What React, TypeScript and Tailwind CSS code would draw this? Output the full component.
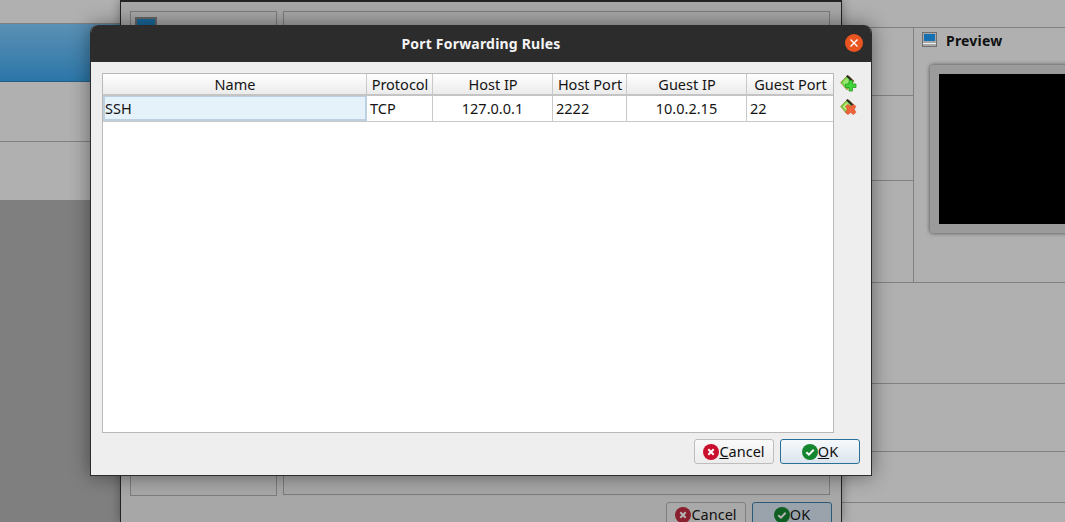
import type { ReactNode } from 'react'

const font = { sans: 'font-["Noto_Sans",sans-serif]' }

function CancelIcon({ dim }: { dim?: boolean }) {
  return (
    <svg viewBox="0 0 16 16" className="h-4 w-4 shrink-0">
      <circle cx="8" cy="8" r="8" fill={dim ? '#8a1f30' : '#c8102e'} />
      <path d="M5.3 5.3l5.4 5.4M10.7 5.3l-5.4 5.4" stroke={dim ? '#b5b5b5' : '#fff'} strokeWidth="2" />
    </svg>
  )
}

function OkIcon({ dim }: { dim?: boolean }) {
  return (
    <svg viewBox="0 0 16 16" className="h-4 w-4 shrink-0">
      <circle cx="8" cy="8" r="8" fill={dim ? '#0f5f22' : '#14862f'} />
      <path d="M4.3 8.2l2.6 2.5 4.8-5" fill="none" stroke={dim ? '#b5b5b5' : '#fff'} strokeWidth="2" />
    </svg>
  )
}

function PortIcon({ remove }: { remove?: boolean }) {
  return (
    <svg viewBox="0 0 17 17" className="h-[17px] w-[17px]">
      <path d="M0.5 7.5L7 1l2 0 5 5-7 9z" fill="#5fce3c" stroke="#c08a48" strokeWidth="0.8" />
      <path d="M6 1.2L7.6 0l6.2 6-1.5 1.4z" fill="#2b2b2b" />
      <path d="M2.5 7.5L7 3l3 3-4 6z" fill={remove ? '#b8e87a' : '#9be86f'} />
      {remove ? (
        <path
          d="M5.6 7.4L7.8 5.4l2.9 1.9 2.9-1.9 2.3 2-1.7 2.9 1.7 2.9-2.3 2.4-2.9-2-2.9 2-2.2-2.4 1.7-2.9z"
          fill="#f0643c"
          stroke="#d04a24"
          strokeWidth="0.6"
        />
      ) : (
        <path
          d="M9 5.5h3.5V9H16v3.5h-3.5V16H9v-3.5H5.5V9H9z"
          fill="#3fd63a"
          stroke="#2a9a24"
          strokeWidth="0.8"
        />
      )}
    </svg>
  )
}

function Button({ children, primary }: { children: ReactNode; primary?: boolean }) {
  return (
    <button
      className={`flex h-[25px] w-20 items-center justify-center rounded-[3px] border text-[14.5px] text-[#101010] ${
        primary
          ? 'border-[#2a6f97] bg-gradient-to-b from-[#f6f9fb] to-[#dbe5ed]'
          : 'border-[#bdbdbd] bg-gradient-to-b from-[#fafafa] to-[#ececec]'
      }`}
    >
      {children}
    </button>
  )
}

const COLS = [
  { label: 'Name', w: 'w-[264px]' },
  { label: 'Protocol', w: 'w-[66px]' },
  { label: 'Host IP', w: 'w-[120px]' },
  { label: 'Host Port', w: 'w-[74px]' },
  { label: 'Guest IP', w: 'w-[120px]' },
  { label: 'Guest Port', w: 'flex-1' },
]

function Dialog() {
  return (
    <div className="absolute left-[90px] top-[25px] z-20 flex h-[451px] w-[782px] flex-col overflow-hidden rounded-t-[8px] border border-t-0 border-[#2c2c2c] bg-[#eeeeee] shadow-[0_0_20px_rgba(0,0,0,0.45)]">
      <div className="relative flex h-[37px] shrink-0 items-center justify-center bg-[#2c2c2c]">
        <span className="text-[14px] font-bold tracking-[0.2px] text-[#f4f4f4]">Port Forwarding Rules</span>
        <div className="absolute right-[8px] top-[9px] flex h-[18px] w-[18px] items-center justify-center rounded-full bg-[#e95420]">
          <svg viewBox="0 0 10 10" className="h-2.5 w-2.5">
            <path d="M1.5 1.5l7 7M8.5 1.5l-7 7" stroke="#fff" strokeWidth="1.4" />
          </svg>
        </div>
      </div>

      <div className="flex min-h-0 flex-1 flex-col p-[11px]">
        <div className="flex h-[360px] gap-[6px]">
          <div className="flex w-[732px] flex-col border border-[#b9b9b9] bg-white text-[14.5px] text-[#141414]">
            <div className="flex h-[22px] border-b-2 border-[#c4c4c4] bg-gradient-to-b from-white to-[#ebebeb]">
              {COLS.map((c) => (
                <div
                  key={c.label}
                  className={`${c.w} flex items-center justify-center border-r border-[#c9c9c9] pl-[1px] pt-[2px] last:border-r-0`}
                >
                  {c.label}
                </div>
              ))}
            </div>
            <div className="flex h-[26px] border-b border-[#c9c9c9]">
              <div className="flex w-[264px] items-center border-2 border-t border-[#bcd0df] bg-[#e6f2fa] pt-[2px]">SSH</div>
              <div className="flex w-[66px] items-center border-r border-[#c9c9c9] pl-[3px] pt-[1px]">TCP</div>
              <div className="flex w-[120px] items-center justify-center border-r border-[#c9c9c9] pt-[1px]">127.0.0.1</div>
              <div className="flex w-[74px] items-center border-r border-[#c9c9c9] pl-[3px] pt-[1px]">2222</div>
              <div className="flex w-[120px] items-center justify-center border-r border-[#c9c9c9] pt-[1px]">10.0.2.15</div>
              <div className="flex flex-1 items-center pl-[3px] pt-[1px]">22</div>
            </div>
          </div>
          <div className="flex flex-col gap-[7px] pt-[2px]">
            <PortIcon />
            <PortIcon remove />
          </div>
        </div>
        <div className="mt-[6px] flex justify-end gap-[6px]">
          <Button>
            <CancelIcon />
            <span>
              <span className="underline">C</span>ancel
            </span>
          </Button>
          <Button primary>
            <OkIcon />
            <span>
              <span className="underline">O</span>K
            </span>
          </Button>
        </div>
      </div>
    </div>
  )
}

export default function App() {
  return (
    <div className={`relative flex h-[522px] w-[1065px] overflow-hidden bg-[#b0b0b0] ${font.sans}`}>
      {/* sidebar behind the window */}
      <div className="flex w-[120px] shrink-0 flex-col">
        <div className="h-[24px] shrink-0 border-b border-[#7f7f7f]" />
        <div className="h-[58px] shrink-0 border-b border-[#265f85] bg-gradient-to-b from-[#5a90b4] to-[#2a76a8]" />
        <div className="h-[60px] shrink-0 border-b border-[#808080]" />
        <div className="h-[58px] shrink-0" />
        <div className="flex-1 bg-[#7f7f7f]" />
      </div>

      {/* settings window, dimmed */}
      <div className="z-10 flex w-[722px] shrink-0 flex-col border-x border-t-2 border-[#222222] bg-[#a7a7a7] px-[9px] pt-[9px] shadow-[0_0_10px_rgba(0,0,0,0.35)]">
        <div className="flex h-[485px] shrink-0 gap-[6px]">
          <div className="w-[147px] border border-[#7c7c7c] pl-[4px] pt-[5px]">
            <div className="h-[20px] w-[22px] border-2 border-[#666666] bg-[#17699b]" />
          </div>
          <div className="h-[484px] w-[547px] border border-[#7c7c7c]" />
        </div>
        <div className="mt-[6px] flex justify-end gap-[6px] text-[14.5px] text-[#111111]">
          <div className="flex h-[25px] w-20 shrink-0 items-center justify-center rounded-[3px] border border-[#7d7d7d] bg-[#a9a9a9]">
            <CancelIcon dim />
            <span>Cancel</span>
          </div>
          <div className="flex h-[25px] w-20 shrink-0 items-center justify-center rounded-[3px] border border-[#2a5a78] bg-[#9aa3ab]">
            <OkIcon dim />
            <span>OK</span>
          </div>
        </div>
      </div>

      {/* details pane on the right */}
      <div className="flex flex-1 flex-col">
        <div className="h-[27px] shrink-0" />
        <div className="flex h-[256px] shrink-0 border-y border-[#808080]">
          <div className="flex w-[72px] shrink-0 flex-col border-r border-[#808080]">
            <div className="h-[68px] border-b border-[#808080]" />
            <div className="h-[85px] border-b border-[#808080]" />
          </div>
          <div className="flex-1 overflow-hidden pl-[8px] pt-[4px]">
            <div className="flex h-[15px] items-center gap-[9px]">
              <svg viewBox="0 0 15 15" className="h-[15px] w-[15px]">
                <rect x="0.5" y="0.5" width="14" height="14" fill="#a8a8a8" stroke="#6f6f6f" />
                <rect x="2" y="2" width="11" height="7" fill="#1470b0" />
                <rect x="1" y="11" width="13" height="1" fill="#eeeeee" />
              </svg>
              <span className="pt-[2px] text-[14px] font-bold leading-[15px] tracking-[0.2px] text-[#111111]">Preview</span>
            </div>
            <div className="ml-[8px] mt-[18px] h-[168px] w-[160px] rounded-[3px] bg-[#9b9b9b] p-[9px] shadow-[0_0_4px_rgba(0,0,0,0.6)]">
              <div className="h-full w-full bg-black" />
            </div>
          </div>
        </div>
        <div className="h-[101px] shrink-0 border-b border-[#808080]" />
        <div className="h-[68px] shrink-0 border-b border-[#808080]" />
        <div className="h-[51px] shrink-0 border-b border-[#808080]" />
      </div>

      <Dialog />
    </div>
  )
}
